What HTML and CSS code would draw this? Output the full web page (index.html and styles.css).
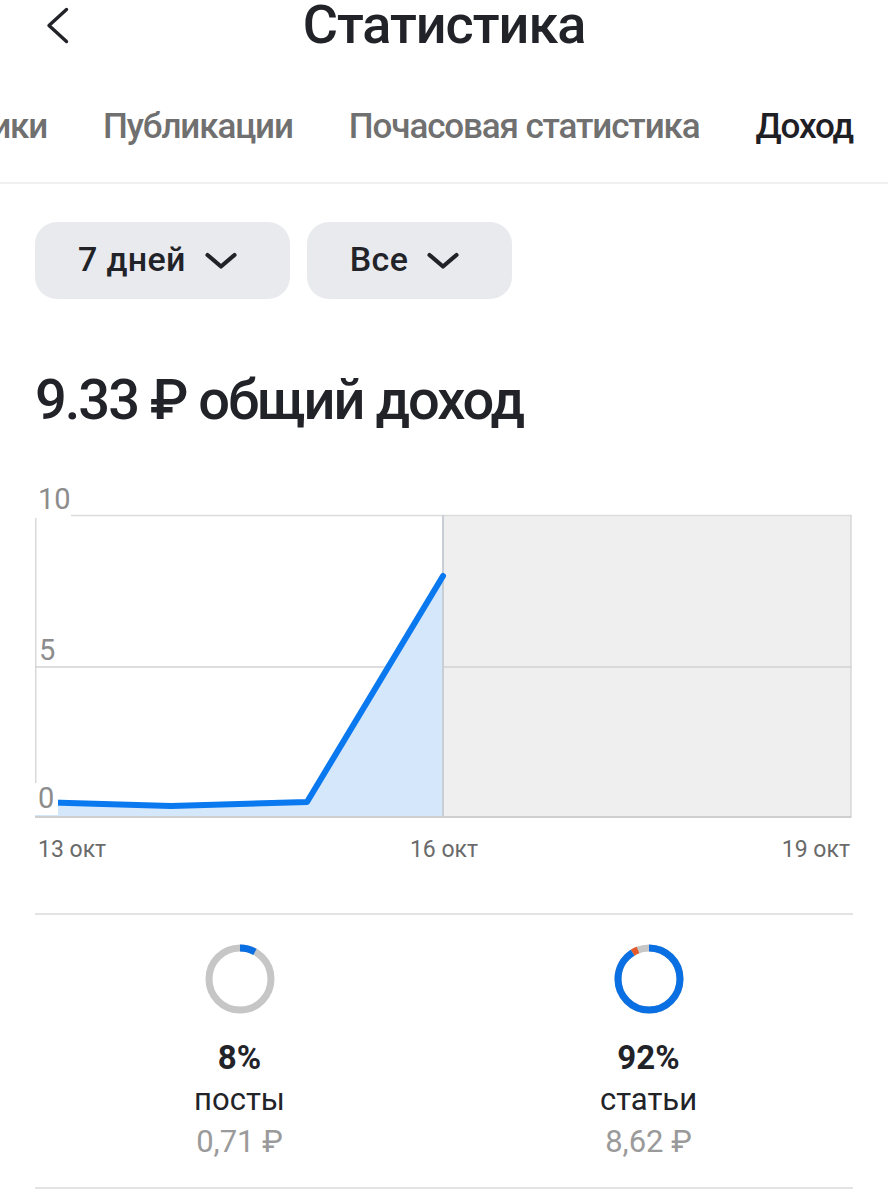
FILE: index.html
```html
<!DOCTYPE html>
<html lang="ru">
<head>
<meta charset="utf-8">
<title>Статистика</title>
<link rel="stylesheet" href="styles.css">
</head>
<body>
<div class="page">
  <header class="header">
    <div class="back">
      <svg width="26" height="41" viewBox="0 0 26 41"><polyline points="21.5,4.5 4,20.5 21.5,36.5" fill="none" stroke="#222328" stroke-width="3.4" stroke-linecap="round" stroke-linejoin="round"/></svg>
    </div>
    <h1 class="title">Статистика</h1>
    <div></div>
  </header>

  <nav class="tabs">
    <span class="tab">Метрики</span>
    <span class="tab">Публикации</span>
    <span class="tab">Почасовая статистика</span>
    <span class="tab active">Доход</span>
  </nav>

  <main class="content">
    <div class="filters">
      <button class="pill">
        <span>7 дней</span>
        <svg width="32" height="20" viewBox="0 0 32 20"><polyline points="2.5,4 16,15.5 29.5,4" fill="none" stroke="#222328" stroke-width="4.2" stroke-linecap="round" stroke-linejoin="round"/></svg>
      </button>
      <button class="pill">
        <span>Все</span>
        <svg width="32" height="20" viewBox="0 0 32 20"><polyline points="2.5,4 16,15.5 29.5,4" fill="none" stroke="#222328" stroke-width="4.2" stroke-linecap="round" stroke-linejoin="round"/></svg>
      </button>
    </div>

    <h2 class="total">9.33 ₽ общий доход</h2>

    <div class="chart">
      <svg class="plot" width="818" height="340" viewBox="0 0 818 340">
        <rect x="408" y="35" width="408" height="302" fill="#efefef"/>
        <line x1="0" y1="35.5" x2="816.5" y2="35.5" stroke="#dcdcdc" stroke-width="1.5"/>
        <line x1="0.75" y1="35" x2="0.75" y2="337" stroke="#d9d9d9" stroke-width="1.5"/>
        <line x1="816" y1="35" x2="816" y2="337" stroke="#d9d9d9" stroke-width="1.5"/>
        <line x1="0" y1="187" x2="816.5" y2="187" stroke="#d2d2d2" stroke-width="1.5"/>
        <polygon points="0,322 136,326 272,322 408,96 408,337 0,337" fill="#d4e7fb"/>
        <line x1="408" y1="35" x2="408" y2="337" stroke="#c9ced6" stroke-width="2"/>
        <polyline points="0,322 136,326 272,322 408,96" fill="none" stroke="#0a78ef" stroke-width="6" stroke-linecap="round" stroke-linejoin="round"/>
        <line x1="0" y1="337" x2="816.5" y2="337" stroke="#cfcfcf" stroke-width="2"/>
        <rect x="0" y="2" width="36" height="36" fill="#ffffff"/>
        <rect x="0" y="303" width="23" height="32" fill="#ffffff"/>
        <text x="3" y="29" class="ylabel">10</text>
        <text x="4" y="180" class="ylabel">5</text>
        <text x="3" y="328" class="ylabel">0</text>
      </svg>
      <div class="xlabels">
        <span>13 окт</span>
        <span>16 окт</span>
        <span>19 окт</span>
      </div>
    </div>

    <section class="split">
      <div class="part">
        <svg width="70" height="70" viewBox="0 0 70 70">
          <circle cx="35" cy="35" r="31" fill="none" stroke="#c6c6c6" stroke-width="7"/>
          <circle cx="35" cy="35" r="31" fill="none" stroke="#0a6fe3" stroke-width="7" stroke-dasharray="15.6 200" transform="rotate(-90 35 35)"/>
        </svg>
        <div class="pct">8%</div>
        <div class="name">посты</div>
        <div class="sum">0,71 ₽</div>
      </div>
      <div class="part">
        <svg width="70" height="70" viewBox="0 0 70 70">
          <circle cx="35" cy="35" r="31" fill="none" stroke="#c6c6c6" stroke-width="7"/>
          <circle cx="35" cy="35" r="31" fill="none" stroke="#e55a2b" stroke-width="7" stroke-dasharray="0 177.2 6 200" transform="rotate(-90 35 35)"/>
          <circle cx="35" cy="35" r="31" fill="none" stroke="#0a6fe3" stroke-width="7" stroke-dasharray="177.2 200" transform="rotate(-90 35 35)"/>
        </svg>
        <div class="pct">92%</div>
        <div class="name">статьи</div>
        <div class="sum">8,62 ₽</div>
      </div>
    </section>
  </main>
</div>
</body>
</html>
```
FILE: styles.css
```css
* { box-sizing: border-box; }
html, body { margin: 0; padding: 0; background: #ffffff; }
body {
  font-family: Roboto, "Noto Sans", "Liberation Sans", sans-serif;
  color: #222328;
  width: 888px;
}
.page { width: 888px; overflow: hidden; }

.header {
  display: grid;
  grid-template-columns: 1fr auto 1fr;
  align-items: center;
  height: 50px;
}
.back { padding-left: 45px; display: flex; align-items: center; }
.back svg { display: block; }
.title {
  margin: 0;
  font-size: 54px;
  line-height: 50px;
  font-weight: 500;
  letter-spacing: -0.019em;
  color: #222328;
}

.tabs {
  display: flex;
  justify-content: flex-end;
  gap: 56px;
  padding: 55px 35px 33px 0;
  border-bottom: 2px solid #eff0f2;
  overflow: hidden;
  white-space: nowrap;
}
.tab {
  flex: none;
  font-size: 35px;
  line-height: 44px;
  font-weight: 500;
  letter-spacing: -0.032em;
  color: #707070;
}
.tab.active { color: #1f2025; }

.content { padding: 0 35px; }

.filters {
  display: flex;
  gap: 17px;
  margin-top: 38px;
}
.pill {
  display: inline-flex;
  align-items: center;
  gap: 19px;
  height: 77px;
  padding: 0 53px 0 43px;
  border: none;
  border-radius: 22px;
  background: #e9eaee;
  font-family: inherit;
  font-size: 34px;
  font-weight: 500;
  color: #222328;
  letter-spacing: 0.01em;
}
.pill span { margin-top: -3px; }
.pill svg { display: block; margin-top: 1px; }

.total {
  margin: 71px 0 0;
  font-size: 56px;
  line-height: 60px;
  font-weight: 500;
  letter-spacing: -0.036em;
  color: #222328;
}

.chart { margin-top: 50px; }
.plot { display: block; }
.ylabel {
  font-family: Roboto, "Noto Sans", sans-serif;
  font-size: 29px;
  fill: #8c8c8c;
}
.xlabels {
  display: flex;
  justify-content: space-between;
  padding: 0 3px;
  margin-top: 15px;
  font-size: 23px;
  line-height: 30px;
  color: #6a6a6a;
}

.split {
  display: grid;
  grid-template-columns: 1fr 1fr;
  margin-top: 48px;
  border-top: 2px solid #e3e3e3;
  border-bottom: 2px solid #e3e3e3;
  padding: 29px 0 24px;
}
.part {
  display: flex;
  flex-direction: column;
  align-items: center;
}
.part svg { display: block; }
.pct {
  margin-top: 23px;
  font-size: 33px;
  line-height: 42px;
  font-weight: 700;
  color: #222328;
}
.name {
  font-size: 31px;
  line-height: 42px;
  color: #222328;
}
.sum {
  font-size: 31px;
  line-height: 42px;
  color: #9a9a9a;
}
```
